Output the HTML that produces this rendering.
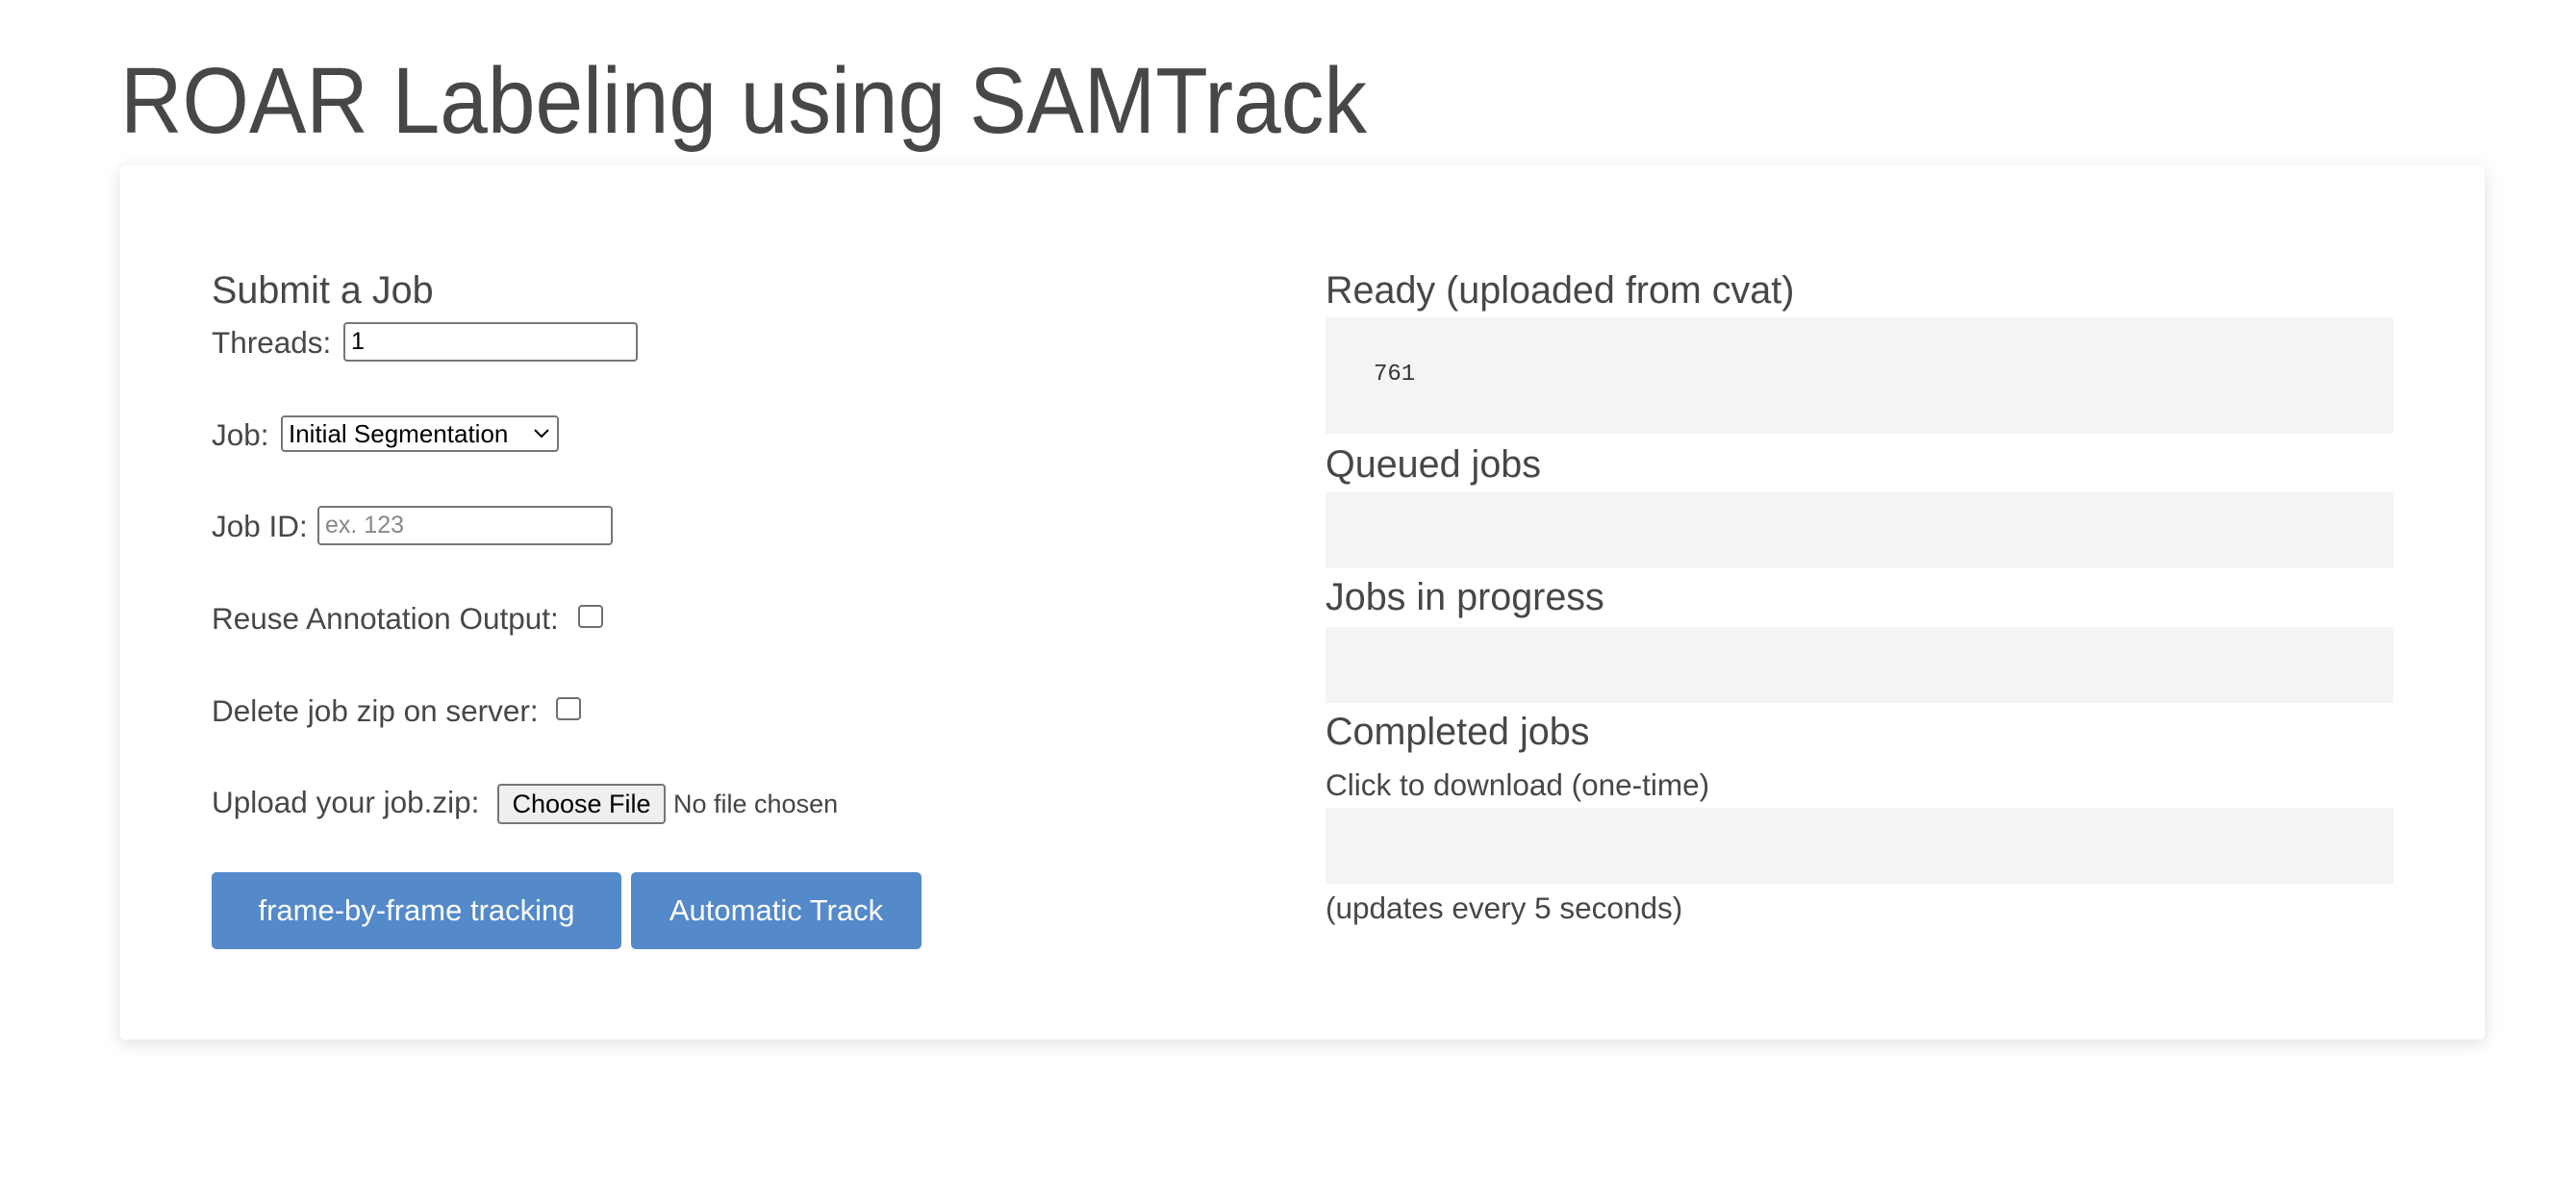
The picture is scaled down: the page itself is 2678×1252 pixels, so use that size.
<!DOCTYPE html>
<html><head><meta charset="utf-8"><style>
*{margin:0;padding:0;box-sizing:border-box}
body{width:2678px;height:1252px;background:#fff;position:relative;overflow:hidden;font-family:"Liberation Sans",sans-serif;color:#474747}
.a{position:absolute;white-space:nowrap;line-height:1}
.card{position:absolute;left:125px;top:172px;width:2458px;height:909px;background:#fff;border-radius:6px;box-shadow:0 4px 18px rgba(0,0,0,.13)}
.h{font-size:39.5px}
.t{font-size:31.5px}
.in{position:absolute;border:2px solid #767676;border-radius:4px;background:#fff;font-size:25px;color:#000;padding-left:6px;line-height:37px}
.cb{position:absolute;width:26px;height:24px;border:2px solid #707070;border-radius:4px;background:#fff}
.box{position:absolute;left:1378px;width:1110px;background:#f4f4f4}
.btn{position:absolute;top:907px;height:80px;background:#5489ca;border-radius:5px;color:#fff;font-size:31px;line-height:80px;text-align:center}
</style></head><body>
<svg class="a" style="left:0;top:0" width="1500" height="170"><text x="125" y="138" font-family="Liberation Sans, sans-serif" font-size="97" fill="#474747" textLength="1296" lengthAdjust="spacingAndGlyphs">ROAR Labeling using SAMTrack</text></svg>
<div class="card"></div>
<div class="a h" style="left:220px;top:283px">Submit a Job</div>
<div class="a t" style="left:220px;top:341px">Threads:</div>
<div class="in" style="left:357px;top:335px;width:306px;height:41px">1</div>
<div class="a t" style="left:220px;top:437px">Job:</div>
<div class="in" style="left:292px;top:432px;width:289px;height:38px;line-height:34px;font-size:26px">Initial Segmentation<svg style="position:absolute;right:8px;top:12px" width="16" height="10"><path d="M1 1 L8 8 L15 1" stroke="#000" stroke-width="2" fill="none"/></svg></div>
<div class="a t" style="left:220px;top:532px">Job ID:</div>
<div class="in" style="left:330px;top:526px;width:307px;height:41px;color:#888">ex. 123</div>
<div class="a t" style="left:220px;top:628px">Reuse Annotation Output:</div>
<div class="cb" style="left:601px;top:629px"></div>
<div class="a t" style="left:220px;top:724px">Delete job zip on server:</div>
<div class="cb" style="left:578px;top:725px"></div>
<div class="a t" style="left:220px;top:819px">Upload your job.zip:</div>
<div class="in" style="left:517px;top:815px;width:175px;height:42px;background:#efefef;padding:0;text-align:center;font-size:27px;line-height:38px">Choose File</div>
<div class="a" style="left:700px;top:823px;font-size:27px;color:#444">No file chosen</div>
<div class="btn" style="left:220px;width:426px">frame-by-frame tracking</div>
<div class="btn" style="left:656px;width:302px">Automatic Track</div>

<div class="a h" style="left:1378px;top:283px">Ready (uploaded from cvat)</div>
<div class="box" style="top:330px;height:121px"></div>
<div class="a" style="left:1428px;top:378px;font-family:'Liberation Mono',monospace;font-size:24px;color:#333">761</div>
<div class="a h" style="left:1378px;top:464px">Queued jobs</div>
<div class="box" style="top:512px;height:79px"></div>
<div class="a h" style="left:1378px;top:602px">Jobs in progress</div>
<div class="box" style="top:652px;height:79px"></div>
<div class="a h" style="left:1378px;top:742px">Completed jobs</div>
<div class="a t" style="left:1378px;top:801px">Click to download (one-time)</div>
<div class="box" style="top:840px;height:79px"></div>
<div class="a t" style="left:1378px;top:929px">(updates every 5 seconds)</div>
</body></html>
